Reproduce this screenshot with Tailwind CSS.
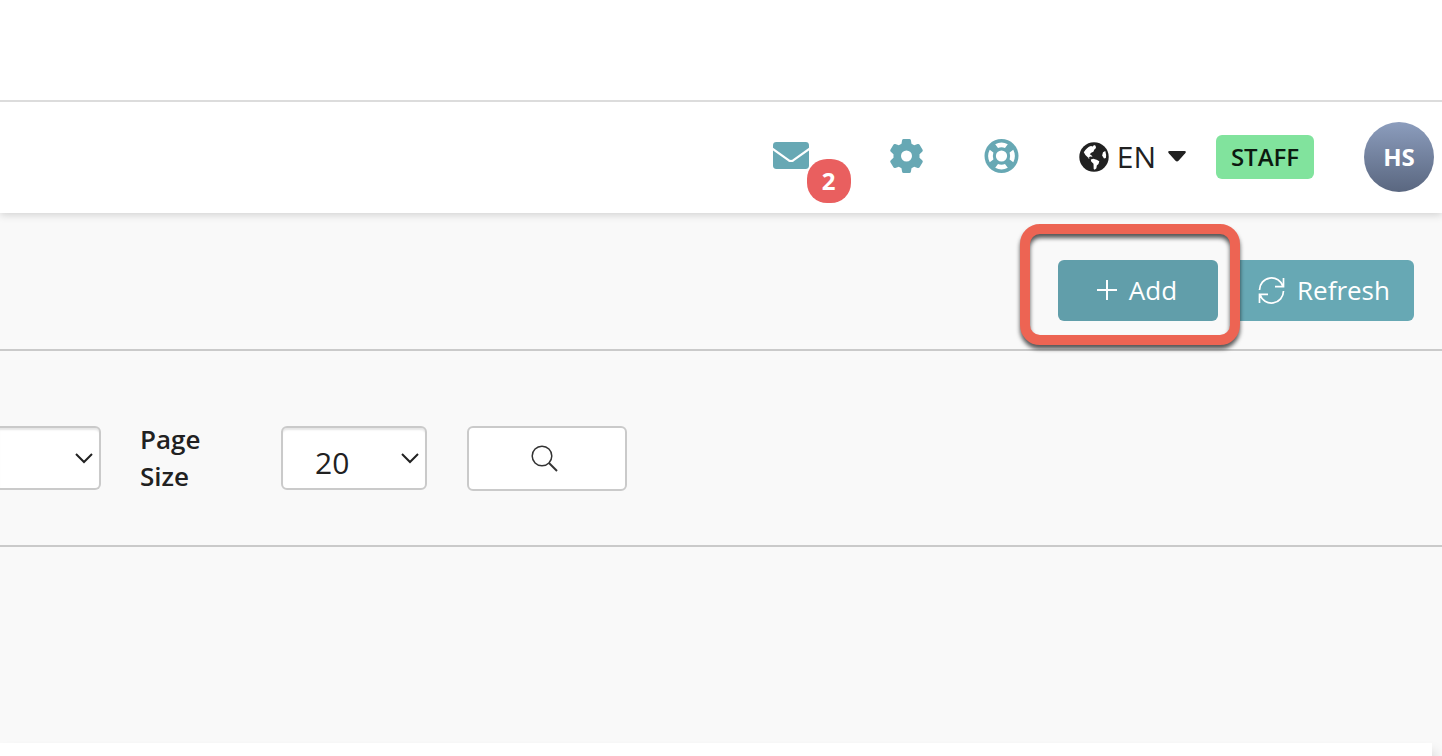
<!DOCTYPE html>
<html lang="en">
<head>
<meta charset="utf-8">
<meta name="viewport" content="width=device-width, initial-scale=1">
<title>Staff list</title>
<script src="https://cdn.jsdelivr.net/npm/@tailwindcss/browser@4"></script>
</head>
<body class="min-h-screen overflow-hidden bg-[#f9f9f9] font-['Open_Sans','Noto_Sans',sans-serif] text-[#212121] flex flex-col">
  <div class="relative z-10 h-25 shrink-0 bg-white"></div>

  <header class="relative shrink-0 flex h-[113px] items-center justify-end border-t-2 border-[#dcdcdc] bg-white pr-2 pb-0.5 shadow-[0_2px_8px_rgba(0,0,0,0.16)]">
    <nav class="flex items-center text-[#67a8b4]" aria-label="Account">
      <button type="button" aria-label="Messages, 2 unread" class="relative mr-20 h-9 w-9">
        <svg class="h-9 w-9" viewBox="0 0 36 36" aria-hidden="true">
          <rect y="3" width="36" height="27" rx="3.4" fill="currentColor"/>
          <path d="M-1 9.500 15.500 21.200Q18 22.800 20.500 21.200L37 9.500" fill="none" stroke="#fff" stroke-width="2.200"/>
        </svg>
        <span class="absolute left-[34px] top-5 flex h-11 w-11 items-center justify-center rounded-[20px] bg-[#e95f5f] text-2xl font-bold text-white">2</span>
      </button>
      <button type="button" aria-label="Settings" class="mr-15">
        <svg class="h-9 w-[35px]" viewBox="0 0 35 36" fill="currentColor" aria-hidden="true">
          <path fill-rule="evenodd" d="M14.600 0h5.800q1.300 0 1.500 1.200l.6 3.600 2.700 1.500 3.500-1.200q1.200-.4 1.900.6l3 5.100q.6 1.200-.4 2l-2.700 2.400v3.600l2.700 2.400q1 .8.400 2l-3 5.100q-.7 1-1.900.6l-3.500-1.200-2.700 1.500-.6 3.600q-.2 1.200-1.500 1.200h-5.800q-1.300 0-1.500-1.200l-.6-3.600-2.700-1.500-3.500 1.200q-1.200.4-1.900-.6l-3-5.100q-.6-1.200.4-2l2.700-2.400v-3.600l-2.700-2.400q-1-.8-.4-2l3-5.100q.7-1 1.900-.6l3.500 1.200 2.700-1.500.6-3.600Q13.300 0 14.600 0ZM17.500 11.500a5.500 5.500 0 1 0 0 11 5.500 5.500 0 0 0 0-11Z"/>
        </svg>
      </button>
      <button type="button" aria-label="Help" class="mr-15">
        <svg class="h-9 w-[35px]" viewBox="0 0 35 36" aria-hidden="true">
          <circle cx="17.500" cy="17" r="17" fill="currentColor"/>
          <g fill="#fff">
            <circle cx="17.500" cy="17" r="5.600"/>
            <path id="ring-gap" d="M11.200 5.200Q17.500 2 23.800 5.200L21 8.900Q17.500 7.800 14 8.900Z"/>
            <use href="#ring-gap" transform="rotate(90 17.500 17)"/>
            <use href="#ring-gap" transform="rotate(180 17.500 17)"/>
            <use href="#ring-gap" transform="rotate(270 17.500 17)"/>
          </g>
        </svg>
      </button>
      <button type="button" class="mr-[30px] flex items-center text-[#212121]">
        <svg class="mr-2 h-[30px] w-[30px]" viewBox="0 0 30 30" aria-hidden="true">
          <circle cx="15" cy="15" r="14.700" fill="currentColor"/>
          <path fill="#fff" d="M4.800 10.300Q7.800 5.200 12 4l1.800.6 1.200-1.500 1.600.6.400 2.300-1.800 1.700-.8 2-2.200 1-1.400 1.600 1.600.9 1.200 1.600-2.600-.4-1.800 2 1.800.6L9 15.600Q5.800 13 4.800 10.300ZM11.800 17.600l2.400-.8 3.400 1 2.700 1.400-.8 2.700-1.700 1.600-.4 2.800-1.700 1.400-1-.6-.2-5.400-2.300-2.100ZM24 10.300l2.300-1.200q1.200 3.600.6 7l-1.900.3-1.900-3Z"/>
        </svg>
        <span class="text-3xl">EN</span>
        <svg class="ml-3 h-[11px] w-[18px]" viewBox="0 0 18 11" fill="currentColor" aria-hidden="true"><path d="M1.500 0h15q2.300.3.700 2.300l-6.700 7.500q-1.500 1.500-3 0L.8 2.300Q-.8.300 1.500 0Z"/></svg>
      </button>
    </nav>
    <span class="mr-[50px] flex h-11 w-[98px] items-center justify-center rounded-md bg-[#81e39d] text-2xl font-semibold text-[#0c1a10]">STAFF</span>
    <button type="button" class="flex h-[70px] w-[70px] items-center justify-center rounded-full bg-linear-to-b from-[#8c9dbd] to-[#5a6780] text-2xl font-bold text-white">HS</button>
  </header>

  <section class="shrink-0 flex h-[138px] items-center justify-end border-b-2 border-[#cacaca] pr-7 pt-[18px] text-[26px] text-white" aria-label="Actions">
    <div class="relative mr-4">
      <button type="button" class="flex h-[61px] w-40 items-center justify-center rounded-md bg-[#619eaa] pr-0.5">
        <svg class="mr-3 h-5 w-5" viewBox="0 0 20 20" fill="none" stroke="currentColor" stroke-width="2" aria-hidden="true"><path d="M10 0v20M0 10h20"/></svg>Add
      </button>
      <span class="pointer-events-none absolute -left-[38px] -right-[22px] -top-9 -bottom-6 z-10 rounded-[20px] border-10 border-[#ed6453] drop-shadow-[0_4px_2px_rgba(0,0,0,0.65)]"></span>
    </div>
    <button type="button" class="flex h-[61px] w-[180px] items-center rounded-md bg-[#67a8b4] pl-6">
      <svg class="mr-3 h-[27px] w-[27px]" viewBox="0 0 27 27" fill="none" stroke="currentColor" stroke-width="1.700" aria-hidden="true"><path d="M1.500 13A12 12 0 0 1 25 9.500M25.500 1v8.700H17M25.500 14A12 12 0 0 1 2 17.500M1.500 26v-8.700H10"/></svg>Refresh
    </button>
  </section>

  <form class="shrink-0 flex h-[196px] items-start border-b-2 border-[#cacaca] pt-[75px]">
    <div class="relative w-[101px]">
      <select aria-label="Filter" class="h-16 w-full appearance-none rounded-r-md border-2 border-l-0 border-[#cacaca] bg-white shadow-[inset_0_3px_2px_-1px_rgba(0,0,0,0.1)]"><option></option></select>
      <svg class="pointer-events-none absolute right-2 top-[27px] h-[11px] w-[18px]" viewBox="0 0 18 11" fill="none" stroke="currentColor" stroke-width="2" aria-hidden="true"><path d="m1 1 8 8 8-8"/></svg>
    </div>
    <label for="size" class="-mt-[5px] ml-[39px] w-[141px] text-[26px] leading-[37px] font-semibold">Page<br>Size</label>
    <div class="relative w-[146px]">
      <select id="size" class="h-16 w-full appearance-none rounded-md border-2 border-[#cacaca] bg-white pt-2.5 pl-8 text-3xl shadow-[inset_0_3px_2px_-1px_rgba(0,0,0,0.1)]"><option>20</option><option>50</option></select>
      <svg class="pointer-events-none absolute right-2 top-[27px] h-[11px] w-[18px]" viewBox="0 0 18 11" fill="none" stroke="currentColor" stroke-width="2" aria-hidden="true"><path d="m1 1 8 8 8-8"/></svg>
    </div>
    <button type="submit" aria-label="Search" class="ml-10 flex h-[65px] w-40 items-center justify-center rounded-md border-2 border-[#cacaca] bg-white pr-1.5">
      <svg class="h-[27px] w-[27px]" viewBox="0 0 27 27" fill="none" stroke="#333" aria-hidden="true"><circle cx="11" cy="11" r="9.800" stroke-width="1.500"/><path d="m18 18 8 8" stroke-width="2"/></svg>
    </button>
  </form>

  <main class="mt-[196px] mr-2.5 flex-1 bg-white shadow-[4px_8px_12px_rgba(0,0,0,0.12)]"></main>
</body>
</html>
